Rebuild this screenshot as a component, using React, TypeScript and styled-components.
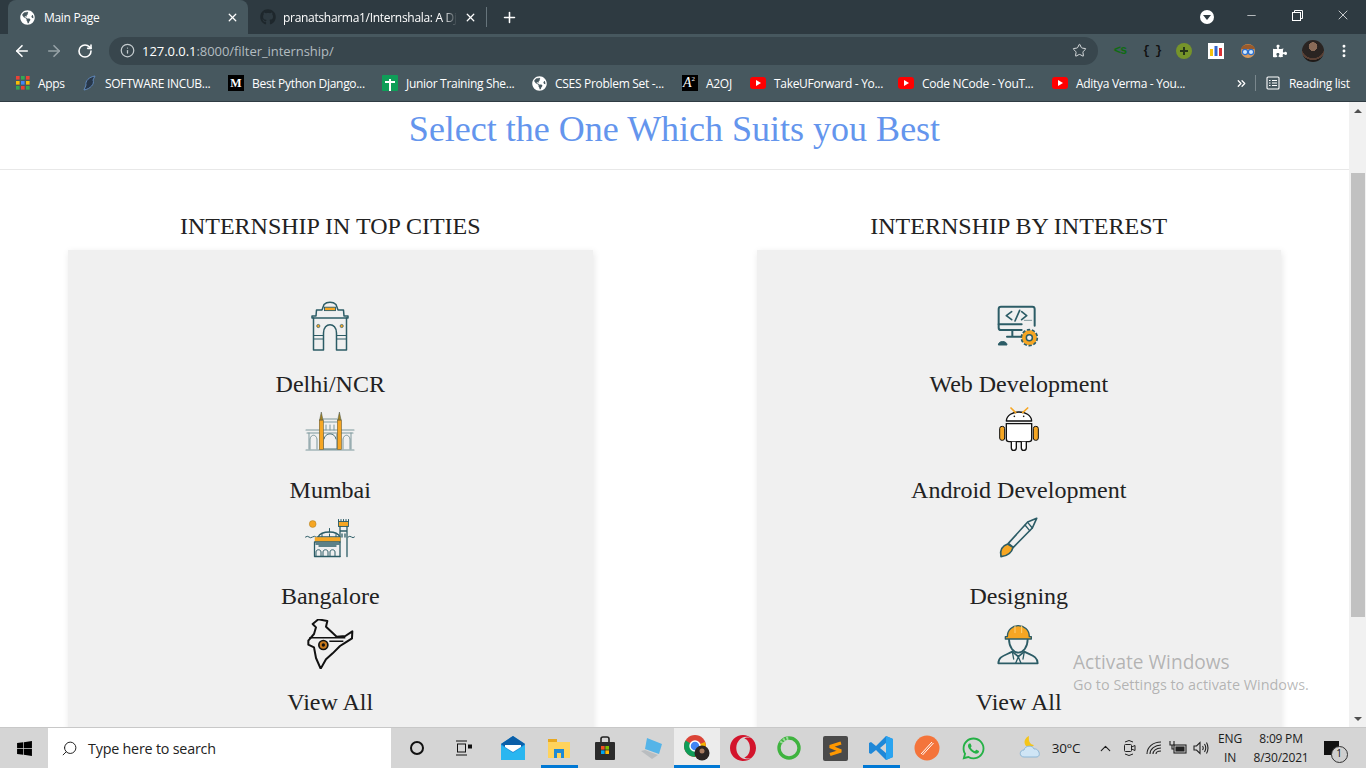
import React from "react";
import styled, { createGlobalStyle } from "styled-components";
import { ArrowLeft, ArrowRight, RotateCw, Info, Star, X, Plus, Minus, MoreVertical, ChevronUp, ChevronsRight, Search } from "lucide-react";
import { FaGlobeAmericas, FaGithub, FaPuzzlePiece, FaWindows, FaWhatsapp } from "react-icons/fa";
import { SiOpera } from "react-icons/si";

const GlobalStyle = createGlobalStyle`
  html, body { margin: 0; padding: 0; overflow: hidden; background: #fff; }
  * { box-sizing: border-box; }
`;

const UI = `"Open Sans", "Noto Sans", sans-serif`;
const SERIF = `"Liberation Serif", "Times New Roman", serif`;
const TEAL = "#2c5c66";
const ORANGE = "#f6a623";

const Screen = styled.div`
  position: relative;
  width: 1366px;
  height: 768px;
  display: flex;
  flex-direction: column;
  overflow: hidden;
`;

/* browser chrome */
const TabStrip = styled.div`
  height: 34px;
  background: #2e3a41;
  display: flex;
  align-items: flex-start;
  padding-left: 8px;
  flex: none;
`;

const Tab = styled.div<{ $active?: boolean; $w: number }>`
  width: ${(p) => p.$w}px;
  height: 34px;
  display: flex;
  align-items: center;
  padding: 0 9px 0 12px;
  gap: 7px;
  font: 12px ${UI};
  letter-spacing: -0.3px;
  color: #fff;
  background: ${(p) => (p.$active ? "#47585f" : "transparent")};
  border-radius: 8px 8px 0 0;
  svg { flex: none; }
`;

const TabTitle = styled.span<{ $fade?: boolean }>`
  flex: 1;
  white-space: nowrap;
  ${(p) => (p.$fade ? "-webkit-mask-image: linear-gradient(to right, #000 92%, transparent);" : "")}
`;

const TabDivider = styled.div`
  width: 1px;
  height: 20px;
  margin-top: 7px;
  background: #66747b;
`;

const NewTab = styled.div`
  width: 44px;
  height: 34px;
  display: flex;
  align-items: center;
  justify-content: center;
  color: #fff;
`;

const WindowControls = styled.div`
  margin-left: auto;
  height: 34px;
  display: flex;
  align-items: flex-start;
  color: #fff;
`;

const ProfileDot = styled.div`
  width: 14px;
  height: 14px;
  margin: 10px 14px 0 0;
  border-radius: 50%;
  background: #fff;
  display: flex;
  align-items: center;
  justify-content: center;
  &::after {
    content: "";
    border: 4px solid transparent;
    border-top: 5px solid #2e3a41;
    border-bottom: 0;
  }
`;

const WinButton = styled.div`
  width: 46px;
  height: 30px;
  display: flex;
  align-items: center;
  justify-content: center;
`;

const Toolbar = styled.div`
  height: 33px;
  flex: none;
  background: #47585f;
  display: flex;
  align-items: center;
  padding-left: 13px;
  color: #fff;
`;

const NavButton = styled.div<{ $dim?: boolean }>`
  width: 32px;
  display: flex;
  justify-content: flex-start;
  color: ${(p) => (p.$dim ? "#97a2a7" : "#fff")};
`;

const Omnibox = styled.div`
  width: 989px;
  height: 28px;
  border-radius: 14px;
  background: #38464d;
  display: flex;
  align-items: center;
  padding: 0 11px;
  gap: 7px;
  font: 13px ${UI};
  letter-spacing: -0.05px;
  color: #fff;
`;

const UrlRest = styled.span`
  color: #b3bcc0;
`;

const OmniStar = styled.div`
  margin-left: auto;
  display: flex;
  color: #d8dcde;
`;

const Extensions = styled.div`
  display: flex;
  align-items: center;
  height: 33px;
  margin-left: 6px;
`;

const Ext = styled.div<{ $w: number }>`
  width: ${(p) => p.$w}px;
  display: flex;
  align-items: center;
  justify-content: center;
`;

const CodeGlyph = styled.span<{ $c: string }>`
  font: 700 12px "Liberation Mono", monospace;
  color: ${(p) => p.$c};
  letter-spacing: -1px;
`;

const Avatar = styled.div`
  width: 22px;
  height: 22px;
  border-radius: 50%;
  background: radial-gradient(circle at 50% 30%, #8a6b58 0 22%, #2a2422 24% 60%, #5a4034 62% 70%, #1e1a18 72%);
`;

const BookmarkBar = styled.div`
  height: 35px;
  flex: none;
  background: #47585f;
  border-bottom: 1px solid #2f3c43;
  display: flex;
  align-items: center;
  padding: 0 0 2px 15px;
  font: 12px ${UI};
  letter-spacing: -0.3px;
  color: #fff;
`;

const Bookmark = styled.div<{ $w: number; $gap?: number }>`
  width: ${(p) => p.$w}px;
  display: flex;
  align-items: center;
  gap: ${(p) => p.$gap ?? 8}px;
  white-space: nowrap;
  svg { flex: none; }
`;

const MediumMark = styled.span`
  width: 16px;
  height: 16px;
  background: #000;
  color: #fff;
  font: 700 12px ${SERIF};
  display: flex;
  align-items: center;
  justify-content: center;
  letter-spacing: 0;
`;

const GreenMark = styled.span`
  position: relative;
  width: 16px;
  height: 16px;
  background: #0f9d58;
  border-radius: 1px;
  &::before { content: ""; position: absolute; left: 7px; top: 4px; width: 2px; height: 12px; background: #fff; }
  &::after { content: ""; position: absolute; left: 3px; top: 6px; width: 10px; height: 2px; background: #fff; }
`;

const A2Mark = styled.span`
  width: 16px;
  height: 16px;
  background: #000;
  color: #fff;
  font: italic 14px ${SERIF};
  display: flex;
  align-items: flex-end;
  padding-left: 1px;
  letter-spacing: 0;
  sup { font-size: 7px; line-height: 9px; align-self: flex-start; font-style: normal; }
`;

const YtMark = styled.span`
  width: 16px;
  height: 12px;
  background: #f00;
  border-radius: 3px;
  display: flex;
  align-items: center;
  justify-content: center;
  &::after {
    content: "";
    border-left: 5px solid #fff;
    border-top: 3px solid transparent;
    border-bottom: 3px solid transparent;
  }
`;

const BarRight = styled.div`
  margin-left: auto;
  display: flex;
  align-items: center;
  padding-right: 15px;
`;

const BarDivider = styled.div`
  width: 1px;
  height: 16px;
  background: #7a878d;
  margin: 0 10px 0 7px;
`;

/* page */
const Viewport = styled.div`
  flex: 1;
  display: flex;
  min-height: 0;
  background: #fff;
`;

const Page = styled.main`
  flex: 1;
  min-width: 0;
  overflow: hidden;
  font-family: ${SERIF};
`;

const Banner = styled.header`
  height: 68px;
  border-bottom: 1px solid #e8e8e8;
  text-align: center;
  font-size: 36px;
  line-height: 54px;
  color: #6495ed;
`;

const Columns = styled.div`
  display: grid;
  grid-template-columns: 1fr 1fr;
  column-gap: 164px;
  padding: 40px 68px 0;
`;

const Column = styled.section``;

const ColumnTitle = styled.h2`
  margin: 0;
  height: 40px;
  text-align: center;
  font-size: 24px;
  font-weight: 400;
  line-height: 32px;
  color: #222;
`;

const Card = styled.div`
  background: #f0f0f0;
  box-shadow: 1px 2px 7px rgba(0, 0, 0, 0.1);
  padding-top: 51px;
  height: 560px;
`;

const Item = styled.div`
  display: flex;
  flex-direction: column;
  align-items: center;
  height: 106px;
`;

const Label = styled.div`
  margin-top: 19px;
  font-size: 24px;
  line-height: 28px;
  color: #222;
`;

const Art = styled.svg`
  width: 50px;
  height: 50px;
  display: block;
  flex: none;
`;

/* scrollbar */
const ScrollTrack = styled.div`
  width: 17px;
  flex: none;
  background: #f1f1f1;
  display: flex;
  flex-direction: column;
  align-items: center;
`;

const ScrollArrow = styled.div<{ $down?: boolean }>`
  height: 17px;
  width: 100%;
  display: flex;
  align-items: center;
  justify-content: center;
  &::after {
    content: "";
    border-left: 4px solid transparent;
    border-right: 4px solid transparent;
    ${(p) => (p.$down ? "border-top: 4px solid #505050;" : "border-bottom: 4px solid #505050;")}
  }
`;

const ScrollThumb = styled.div`
  width: 14px;
  height: 444px;
  margin: 54px 0 auto;
  background: #c1c1c1;
`;

const Watermark = styled.div`
  position: absolute;
  left: 1073px;
  top: 650px;
  font-family: ${UI};
  color: rgba(110, 110, 110, 0.48);
  pointer-events: none;
`;

const WatermarkTitle = styled.div`
  font-size: 19.1px;
  line-height: 24px;
`;

const WatermarkSub = styled.div`
  font-size: 14.4px;
  line-height: 22px;
  white-space: nowrap;
`;

/* taskbar */
const Taskbar = styled.footer`
  height: 41px;
  flex: none;
  background: #d5d5d5;
  display: flex;
  align-items: stretch;
  border-top: 1px solid #c8c8c8;
  font: 13px ${UI};
  color: #1c1c1c;
`;

const StartCell = styled.div`
  width: 48px;
  display: flex;
  align-items: center;
  justify-content: center;
  color: #000;
`;

const SearchBox = styled.div`
  width: 343px;
  background: #fff;
  display: flex;
  align-items: center;
  padding-left: 13px;
  gap: 10px;
  font-size: 14.3px;
  letter-spacing: -0.2px;
  color: #222;
`;

const AppGroup = styled.div`
  display: flex;
  margin-left: 6px;
`;

const TaskCell = styled.div<{ $w?: number; $on?: boolean; $active?: boolean }>`
  width: ${(p) => p.$w ?? 46}px;
  display: flex;
  align-items: center;
  justify-content: center;
  background-color: ${(p) => (p.$active ? "#ececec" : "transparent")};
  background-image: ${(p) => (p.$on ? "linear-gradient(#0078d4, #0078d4)" : "none")};
  background-repeat: no-repeat;
  background-position: center bottom;
  background-size: ${(p) => (p.$active ? "100%" : "37px")} 3px;
`;

const TrayGroup = styled.div`
  display: flex;
  margin-left: 22px;
`;

const Tray = styled.div<{ $w: number; $col?: boolean }>`
  width: ${(p) => p.$w}px;
  display: flex;
  flex-direction: ${(p) => (p.$col ? "column" : "row")};
  align-items: center;
  justify-content: center;
  font-size: 12px;
  line-height: 19px;
  letter-spacing: -0.2px;
  svg { flex: none; }
`;

const TempText = styled.span`
  font-size: 13.5px;
  letter-spacing: -0.3px;
  margin-right: 5px;
`;

const Notify = styled.div`
  position: relative;
  width: 15px;
  height: 14px;
  margin-right: 4px;
  background: #111;
  &::after {
    content: "1";
    position: absolute;
    right: -9px;
    bottom: -8px;
    width: 15px;
    height: 15px;
    border-radius: 50%;
    border: 1px solid #333;
    background: #cfcfcf;
    font: 10px/13px ${UI};
    text-align: center;
    color: #111;
  }
`;

const Line = ({ d, c = TEAL, w = 1.3 }: { d: string; c?: string; w?: number }) => (
  <path d={d} fill="none" stroke={c} strokeWidth={w} strokeLinecap="round" strokeLinejoin="round" />
);

const IndiaGate = () => (
  <Art viewBox="0 0 50 50">
    <Line d="M7 17 V15 H11 L11.5 9 H17 L19 3.5 C22 0.5 28 0.5 31 3.5 L33 9 H38.5 L39 15 H43 V17 Z" w={1.5} />
    <rect x="19.5" y="6.2" width="11" height="3.4" fill={ORANGE} stroke={TEAL} strokeWidth="0.9" />
    <Line d="M8.5 17 V49 H18.5 V32 C18.5 21 31.5 21 31.5 32 V49 H41.5 V17" w={1.5} />
    <Line d="M8.5 34.5 H18.5 M31.5 34.5 H41.5 M8.5 38 H18.5 M31.5 38 H41.5" w={1} />
    <circle cx="13.3" cy="25" r="1.6" fill={ORANGE} stroke={TEAL} strokeWidth="0.7" />
    <circle cx="36.7" cy="25" r="1.6" fill={ORANGE} stroke={TEAL} strokeWidth="0.7" />
  </Art>
);

const GatewayMumbai = () => (
  <Art viewBox="0 0 50 50">
    <Line d="M1 23 H49 M2 26 H48 M18 12 H32 M18 15 H32 M1 43 H49" c="#7d979c" w={1.1} />
    <Line d="M18 27 V42 H32 V27 M19 32 C20 25 30 25 31 32" c="#4d737b" w={1} />
    <Line d="M5 42 V32 C6 27 11 27 12 32 V42 M38 42 V32 C39 27 44 27 45 32 V42" c="#7d979c" w={1} />
    <Line d="M4 26 V42 M46 26 V42 M21 18 V23 M25 18 V23 M29 18 V23" c="#7d979c" w={1} />
    <rect x="14.3" y="13" width="4" height="29.5" fill={ORANGE} stroke="#6b5a30" strokeWidth="0.6" />
    <rect x="32.4" y="13" width="4" height="29.5" fill={ORANGE} stroke="#6b5a30" strokeWidth="0.6" />
    <path d="M16.3 5 L14.6 13 H18 Z M34.4 5 L32.7 13 H36.1 Z" fill="#a3801f" stroke="#4d5a50" strokeWidth="0.5" />
  </Art>
);

const PalaceBangalore = () => (
  <Art viewBox="0 0 50 50">
    <circle cx="7.7" cy="11" r="3.4" fill={ORANGE} stroke="#a67b22" strokeWidth="0.5" />
    <Line d="M0.5 24 q2 -1.5 3.5 0 t3.5 0 t3.5 0 M43 24 q2 -1.5 3.5 0 t3 0" w={1} />
    <rect x="33.5" y="8.5" width="10" height="5" fill={ORANGE} stroke={TEAL} strokeWidth="0.9" />
    <Line d="M33.5 6.5 V8.5 M36 6.5 V8.5 M38.5 6.5 V8.5 M41 6.5 V8.5 M43.5 6.5 V8.5" w={1} />
    <Line d="M35 13.5 V43.5 M42 13.5 V43.5 M35 18 H42 M37 21 V24 M40 21 V24" />
    <Line d="M13 24 C15 20 21 19 24.5 19 C28 19 33 20 35 24 M12 24 H35" />
    <Line d="M24.5 19 V15.5 M17 21.5 V24 M24.5 21 V24 M31 21.5 V24" w={1} />
    <rect x="10" y="24.5" width="25" height="4" fill={ORANGE} stroke={ORANGE} strokeWidth="0.5" />
    <Line d="M9.5 29 H35 M9.5 43.5 H35 M9.5 29 V43.5 M14 33 H31 M11 31 H34" />
    <Line d="M11 43 V39 C11 36 16 36 16 39 V43 M18 43 V39 C18 36 23 36 23 39 V43 M25 43 V39 C25 36 30 36 30 39 V43" w={1} />
  </Art>
);

const IndiaMap = () => (
  <Art viewBox="45 327 150 150">
    <path
      d="M85 328 L112 333 L108 350 L125 366 L140 380 L166 378 L187 364 L186 385 L166 398 L150 408 L128 430 L108 448 L92 476 L78 444 L72 412 L55 404 L55 392 L72 372 L78 352 L68 342 Z"
      fill="#f0f0f0"
      stroke="#111"
      strokeWidth="6"
      strokeLinejoin="round"
    />
    <path d="M58 383 H166 M118 394 H160" fill="none" stroke="#111" strokeWidth="4.5" />
    <circle cx="100" cy="405" r="16" fill="#111" />
    <circle cx="100" cy="405" r="11" fill="#c8791c" />
    <circle cx="100" cy="405" r="5" fill="#111" />
  </Art>
);

const WebDev = () => (
  <Art viewBox="45 18 150 150">
    <Line d="M128 105 H66 Q59 105 59 98 V42 Q59 35 66 35 H160 Q167 35 167 42 V92" w={6} />
    <Line d="M59 88 H128 M100 105 V125 M84 125 H130" w={6} />
    <Line d="M98 50 L82 62 L98 74 M122 46 L108 78 M128 50 L143 62 L128 74" w={5} />
    <Line d="M136 76 H158" c="#7d979c" w={3} />
    <path d="M58 150 C58 136 84 136 84 150 Z" fill={TEAL} stroke={TEAL} strokeWidth="3" />
    <circle cx="151" cy="128" r="16" fill="none" stroke={ORANGE} strokeWidth="14" />
    <circle cx="151" cy="128" r="24" fill="none" stroke={TEAL} strokeWidth="5" strokeDasharray="10 5" />
    <circle cx="151" cy="128" r="9" fill="#f0f0f0" stroke={TEAL} strokeWidth="4.5" />
  </Art>
);

const AndroidBot = () => (
  <Art viewBox="45 336 150 150">
    <path d="M82 378 C84 342 156 342 158 378 Z" fill="#fff" stroke="#111" strokeWidth="4" strokeLinejoin="round" />
    <path d="M82 386 H158 V432 Q158 440 150 440 H90 Q82 440 82 432 Z" fill="#fff" stroke="#111" strokeWidth="4" />
    <rect x="62" y="394" width="15" height="42" rx="7" fill={ORANGE} stroke="#111" strokeWidth="3" />
    <rect x="163" y="394" width="15" height="42" rx="7" fill={ORANGE} stroke="#111" strokeWidth="3" />
    <path d="M97 440 V458 Q97 466 104 466 Q112 466 112 458 V440 M127 440 V458 Q127 466 134 466 Q142 466 142 458 V440" fill="#fff" stroke="#111" strokeWidth="4" />
    <Line d="M110 353 L96 339 M131 353 L146 339" c={ORANGE} w={5} />
    <circle cx="106" cy="364" r="2.5" fill="#111" />
    <circle cx="134" cy="364" r="2.5" fill="#111" />
  </Art>
);

const Brush = () => (
  <Art viewBox="45 9 150 150">
    <path d="M173 25 L146 36 L88 100 L103 112 L160 54 Z" fill="none" stroke={TEAL} strokeWidth="5" strokeLinejoin="round" />
    <Line d="M138 45 L152 62 M146 37 L160 54" w={4} />
    <path d="M86 102 C68 108 62 122 66 140 C82 138 98 130 102 112 Z" fill={ORANGE} stroke={TEAL} strokeWidth="5" strokeLinejoin="round" />
  </Art>
);

const Worker = () => (
  <Art viewBox="45 327 150 150">
    <Line d="M90 388 C90 412 104 428 118 428 C132 428 146 412 146 388" w={5.5} />
    <Line d="M58 460 C58 438 80 436 100 425 L118 440 L136 425 C156 436 176 438 176 460 Z" w={5.5} />
    <Line d="M118 440 L110 460 M118 440 L126 460 M100 425 L104 447 M136 425 L132 447" w={4} />
    <path d="M85 380 C85 336 151 336 151 380 H157 V387 H79 V380 Z" fill={ORANGE} stroke={TEAL} strokeWidth="4" strokeLinejoin="round" />
    <Line d="M108 348 V368 M128 348 V368" c="#ffd27a" w={3} />
  </Art>
);

const cities = [
  { label: "Delhi/NCR", art: <IndiaGate /> },
  { label: "Mumbai", art: <GatewayMumbai /> },
  { label: "Bangalore", art: <PalaceBangalore /> },
  { label: "View All", art: <IndiaMap /> },
];

const interests = [
  { label: "Web Development", art: <WebDev /> },
  { label: "Android Development", art: <AndroidBot /> },
  { label: "Designing", art: <Brush /> },
  { label: "View All", art: <Worker /> },
];

const AppsGrid = () => (
  <svg width="16" height="16" viewBox="0 0 16 16">
    {[0, 1, 2].map((r) =>
      [0, 1, 2].map((c) => (
        <rect key={`${r}${c}`} x={1 + c * 5} y={1 + r * 5} width="3.6" height="3.6" fill={["#ea4335", "#fbbc05", "#34a853", "#4285f4"][(r + c * 2) % 4]} />
      ))
    )}
  </svg>
);

const Swoosh = () => (
  <svg width="16" height="16" viewBox="0 0 16 16">
    <path d="M13 1 C7 2 3 6 4 10 L2 15 C8 14 13 9 11 5 Z" fill="#27374a" stroke="#5f86b8" strokeWidth="1" />
  </svg>
);

const ReadingList = () => (
  <svg width="14" height="14" viewBox="0 0 14 14" fill="none" stroke="#fff" strokeWidth="1.1">
    <rect x="1" y="1" width="12" height="12" rx="1" />
    <path d="M3 4.5 H4.5 M6 4.5 H11 M3 7 H4.5 M6 7 H11 M3 9.5 H4.5 M6 9.5 H11" />
  </svg>
);

const RestoreIcon = () => (
  <svg width="11" height="11" viewBox="0 0 11 11" fill="none" stroke="#fff" strokeWidth="1">
    <rect x="0.5" y="2.5" width="8" height="8" />
    <path d="M2.5 2.5 V0.5 H10.5 V8.5 H8.5" />
  </svg>
);

const BarsExt = () => (
  <svg width="16" height="16" viewBox="0 0 16 16">
    <rect width="16" height="16" fill="#fff" />
    <rect x="2" y="6" width="3" height="7" fill="#f4c20d" />
    <rect x="6.5" y="3" width="3" height="10" fill="#3366cc" />
    <rect x="11" y="5" width="3" height="8" fill="#db3236" />
  </svg>
);

const NerdFace = () => (
  <svg width="16" height="18" viewBox="0 0 16 18">
    <circle cx="8" cy="9" r="7" fill="#d99a5b" />
    <path d="M1 7 C2 1 14 1 15 7 Z" fill="#9a5a2a" />
    <circle cx="5" cy="10" r="2.6" fill="#cfe8ff" stroke="#2a6fd0" strokeWidth="1.2" />
    <circle cx="11" cy="10" r="2.6" fill="#cfe8ff" stroke="#2a6fd0" strokeWidth="1.2" />
  </svg>
);

const Cortana = () => (
  <svg width="16" height="16" viewBox="0 0 16 16">
    <circle cx="8" cy="8" r="6" fill="none" stroke="#111" strokeWidth="2" />
  </svg>
);

const TaskView = () => (
  <svg width="16" height="16" viewBox="0 0 16 16" fill="none" stroke="#111" strokeWidth="1">
    <path d="M0 1 H11 M0 15 H11" />
    <rect x="1.5" y="4" width="8" height="8" />
    <rect x="12.5" y="5" width="3" height="3" fill="#111" />
  </svg>
);

const MailIcon = () => (
  <svg width="24" height="24" viewBox="0 0 24 24">
    <path d="M0 8 L12 0 L24 8 V24 H0 Z" fill="#1e90dc" />
    <path d="M0 8 L12 0 L24 8 L12 16 Z" fill="#0b5fa8" />
    <path d="M4 9 H20 V11 L12 16 L4 11 Z" fill="#fff" />
    <path d="M0 9 L12 17 L24 9 V24 H0 Z" fill="#29b6f0" />
  </svg>
);

const FolderIcon = () => (
  <svg width="24" height="24" viewBox="0 0 24 24">
    <path d="M1 3 H10 V6 H1 Z" fill="#e8a820" />
    <path d="M1 6 H23 V22 H1 Z" fill="#ffd35c" />
    <path d="M7 13 H17 V22 H14 V17 H10 V22 H7 Z" fill="#1f8ad6" />
  </svg>
);

const StoreIcon = () => (
  <svg width="24" height="24" viewBox="0 0 24 24">
    <path d="M8 7 V3 Q8 1 10 1 H14 Q16 1 16 3 V7" fill="none" stroke="#222" strokeWidth="1.6" />
    <rect x="2" y="6" width="20" height="18" rx="1" fill="#2b2b2b" />
    <rect x="8" y="10" width="3.6" height="3.6" fill="#f25022" />
    <rect x="12.4" y="10" width="3.6" height="3.6" fill="#7fba00" />
    <rect x="8" y="14.4" width="3.6" height="3.6" fill="#00a4ef" />
    <rect x="12.4" y="14.4" width="3.6" height="3.6" fill="#ffb900" />
  </svg>
);

const LaptopIcon = () => (
  <svg width="24" height="24" viewBox="0 0 24 24">
    <path d="M8 2 L23 8 L20 18 L6 13 Z" fill="#55b4e8" />
    <path d="M2 15 L6 14 L19 19 L13 23 Z" fill="#b9bdc0" />
  </svg>
);

const ChromeIcon = () => (
  <svg width="30" height="30" viewBox="0 0 30 30">
    <circle cx="13" cy="13" r="11" fill="#db4437" />
    <path d="M13 13 L3.5 7.5 A11 11 0 0 0 13 24 Z" fill="#0f9d58" />
    <path d="M13 13 L23 9 A11 11 0 0 1 13 24 Z" fill="#f4b400" />
    <circle cx="13" cy="13" r="5" fill="#4285f4" stroke="#fff" strokeWidth="1.5" />
    <circle cx="20" cy="20" r="7.5" fill="#2c2522" />
    <circle cx="20" cy="18" r="2.5" fill="#a97c60" />
  </svg>
);

const GreenRing = () => (
  <svg width="26" height="26" viewBox="0 0 26 26">
    <circle cx="13" cy="13" r="10" fill="none" stroke="#3fb33f" strokeWidth="3.4" />
    <path d="M5 8 A10 10 0 0 1 13 3" fill="none" stroke="#9ad99a" strokeWidth="3.4" strokeDasharray="2 1.5" />
  </svg>
);

const SublimeIcon = () => (
  <svg width="25" height="25" viewBox="0 0 25 25">
    <rect width="25" height="25" rx="2" fill="#4a4a4a" />
    <path d="M18 7 L7 10.5 L18 15 L7 18.5" fill="none" stroke="#ff9800" strokeWidth="3.4" strokeLinejoin="bevel" />
  </svg>
);

const VsCodeIcon = () => (
  <svg width="26" height="26" viewBox="0 0 26 26">
    <path d="M18 1 L25 4 V22 L18 25 L8 15 L3 19 L1 18 V8 L3 7 L8 11 Z M18 8 L12 13 L18 18 Z" fill="#1f88d8" fillRule="evenodd" />
    <path d="M18 1 L25 4 V22 L18 25 Z" fill="#2aa4f0" />
  </svg>
);

const PenIcon = () => (
  <svg width="26" height="26" viewBox="0 0 26 26">
    <circle cx="13" cy="13" r="12.5" fill="#f4743b" />
    <path d="M7 19 L18 7 M8.5 20 L19.5 8" stroke="#fff" strokeWidth="1" />
  </svg>
);

const WeatherIcon = () => (
  <svg width="26" height="26" viewBox="0 0 26 26">
    <path d="M11 1 C7 3 5 7 8 11 C11 13 15 12 16 10 C13 10 10 7 11 1 Z" fill="#f5c518" />
    <path d="M6 22 C1 22 1 15 6 15 C7 10 15 10 16 14 C21 13 24 22 18 22 Z" fill="#cfe5f5" stroke="#8db7d6" strokeWidth="1" />
  </svg>
);

const MeetIcon = () => (
  <svg width="13" height="18" viewBox="0 0 13 18" fill="none" stroke="#222" strokeWidth="1">
    <path d="M2 3 Q6 0 10 3 M2 15 Q6 18 10 15" />
    <rect x="1.5" y="5.5" width="7" height="7" rx="1" />
    <path d="M8.5 8 L12 6.5 V11.5 L8.5 10" />
  </svg>
);

const WifiIcon = () => (
  <svg width="16" height="16" viewBox="0 0 16 16" fill="none" stroke="#222" strokeWidth="1.1">
    <path d="M1 14 C1 7 7 2 15 2 M4 14 C4 9 9 5 15 5 M7 14 C7 11 10 8 15 8 M10 14 C10 12 12 11 15 11" />
  </svg>
);

const BatteryPlug = () => (
  <svg width="18" height="16" viewBox="0 0 18 16" fill="none" stroke="#222" strokeWidth="1.1">
    <rect x="5" y="5" width="12" height="8" />
    <rect x="7" y="7" width="8" height="4" fill="#222" />
    <path d="M1 1 V5 H5 V1 M3 5 V9 H5" />
  </svg>
);

const SpeakerIcon = () => (
  <svg width="16" height="16" viewBox="0 0 16 16" fill="none" stroke="#222" strokeWidth="1.1">
    <path d="M1 6 H3.5 L7 2.5 V13.5 L3.5 10 H1 Z" />
    <path d="M9.5 6 Q11 8 9.5 10 M11.5 4 Q14 8 11.5 12 M13.5 2.5 Q16.5 8 13.5 13.5" />
  </svg>
);

const App: React.FC = () => (
  <>
    <GlobalStyle />
    <Screen>
      <TabStrip>
        <Tab $active $w={240}>
          <FaGlobeAmericas size={15} color="#fff" />
          <TabTitle style={{ marginLeft: 2 }}>Main Page</TabTitle>
          <X size={13} strokeWidth={2.4} />
        </Tab>
        <Tab $w={238}>
          <FaGithub size={16} color="#1e272c" />
          <TabTitle $fade>pranatsharma1/Internshala: A Dj</TabTitle>
          <X size={13} strokeWidth={2.4} />
        </Tab>
        <TabDivider />
        <NewTab>
          <Plus size={17} strokeWidth={2.2} />
        </NewTab>
        <WindowControls>
          <ProfileDot />
          <WinButton>
            <Minus size={13} strokeWidth={1.2} />
          </WinButton>
          <WinButton>
            <RestoreIcon />
          </WinButton>
          <WinButton>
            <X size={16} strokeWidth={1.1} />
          </WinButton>
        </WindowControls>
      </TabStrip>

      <Toolbar>
        <NavButton>
          <ArrowLeft size={18} strokeWidth={2.2} />
        </NavButton>
        <NavButton $dim>
          <ArrowRight size={18} strokeWidth={2.2} />
        </NavButton>
        <NavButton>
          <RotateCw size={16} strokeWidth={2.4} />
        </NavButton>
        <Omnibox>
          <Info size={15} color="#c4cbce" />
          <span>
            127.0.0.1<UrlRest>:8000/filter_internship/</UrlRest>
          </span>
          <OmniStar>
            <Star size={15} strokeWidth={1.6} />
          </OmniStar>
        </Omnibox>
        <Extensions>
          <Ext $w={32}>
            <CodeGlyph $c="#0f6b12">{"<s"}</CodeGlyph>
          </Ext>
          <Ext $w={32}>
            <CodeGlyph $c="#111">{"{ }"}</CodeGlyph>
          </Ext>
          <Ext $w={32}>
            <svg width="16" height="16" viewBox="0 0 16 16">
              <circle cx="8" cy="8" r="8" fill="#76942a" />
              <path d="M8 4 V12 M4 8 H12" stroke="#27351a" strokeWidth="2" />
            </svg>
          </Ext>
          <Ext $w={32}>
            <BarsExt />
          </Ext>
          <Ext $w={32}>
            <NerdFace />
          </Ext>
          <Ext $w={32}>
            <FaPuzzlePiece size={14} color="#fff" />
          </Ext>
          <Ext $w={34}>
            <Avatar />
          </Ext>
          <Ext $w={28}>
            <MoreVertical size={16} strokeWidth={2.4} color="#fff" />
          </Ext>
        </Extensions>
      </Toolbar>

      <BookmarkBar>
        <Bookmark $w={67} $gap={7}>
          <AppsGrid />
          Apps
        </Bookmark>
        <Bookmark $w={146} $gap={7}>
          <Swoosh />
          SOFTWARE INCUB...
        </Bookmark>
        <Bookmark $w={154}>
          <MediumMark>M</MediumMark>
          Best Python Django...
        </Bookmark>
        <Bookmark $w={150}>
          <GreenMark />
          Junior Training She...
        </Bookmark>
        <Bookmark $w={150}>
          <FaGlobeAmericas size={15} color="#fff" />
          CSES Problem Set -...
        </Bookmark>
        <Bookmark $w={68}>
          <A2Mark>
            A<sup>2</sup>
          </A2Mark>
          A2OJ
        </Bookmark>
        <Bookmark $w={148}>
          <YtMark />
          TakeUForward - Yo...
        </Bookmark>
        <Bookmark $w={154}>
          <YtMark />
          Code NCode - YouT...
        </Bookmark>
        <Bookmark $w={160}>
          <YtMark />
          Aditya Verma - You...
        </Bookmark>
        <BarRight>
          <ChevronsRight size={13} strokeWidth={2.4} />
          <BarDivider />
          <Bookmark $w={85} $gap={9}>
            <ReadingList />
            Reading list
          </Bookmark>
        </BarRight>
      </BookmarkBar>

      <Viewport>
        <Page>
          <Banner>Select the One Which Suits you Best</Banner>
          <Columns>
            <Column>
              <ColumnTitle>INTERNSHIP IN TOP CITIES</ColumnTitle>
              <Card>
                {cities.map((c) => (
                  <Item key={c.label}>
                    {c.art}
                    <Label>{c.label}</Label>
                  </Item>
                ))}
              </Card>
            </Column>
            <Column>
              <ColumnTitle>INTERNSHIP BY INTEREST</ColumnTitle>
              <Card>
                {interests.map((c) => (
                  <Item key={c.label}>
                    {c.art}
                    <Label>{c.label}</Label>
                  </Item>
                ))}
              </Card>
            </Column>
          </Columns>
        </Page>
        <ScrollTrack>
          <ScrollArrow />
          <ScrollThumb />
          <ScrollArrow $down />
        </ScrollTrack>
      </Viewport>

      <Taskbar>
        <StartCell>
          <FaWindows size={17} />
        </StartCell>
        <SearchBox>
          <Search size={17} strokeWidth={1.4} style={{ transform: "scaleX(-1)" }} />
          Type here to search
        </SearchBox>
        <TaskCell $w={52}>
          <Cortana />
        </TaskCell>
        <TaskCell $w={41}>
          <TaskView />
        </TaskCell>
        <AppGroup>
          <TaskCell>
            <MailIcon />
          </TaskCell>
          <TaskCell $on>
            <FolderIcon />
          </TaskCell>
          <TaskCell>
            <StoreIcon />
          </TaskCell>
          <TaskCell>
            <LaptopIcon />
          </TaskCell>
          <TaskCell $on $active>
            <ChromeIcon />
          </TaskCell>
          <TaskCell>
            <SiOpera size={26} color="#d3142c" />
          </TaskCell>
          <TaskCell>
            <GreenRing />
          </TaskCell>
          <TaskCell>
            <SublimeIcon />
          </TaskCell>
          <TaskCell $on>
            <VsCodeIcon />
          </TaskCell>
          <TaskCell>
            <PenIcon />
          </TaskCell>
          <TaskCell>
            <FaWhatsapp size={25} color="#25b146" />
          </TaskCell>
        </AppGroup>
        <TrayGroup>
          <Tray $w={26}>
            <WeatherIcon />
          </Tray>
          <Tray $w={49}>
            <TempText>30°C</TempText>
          </Tray>
          <Tray $w={24}>
            <ChevronUp size={17} strokeWidth={1.6} />
          </Tray>
          <Tray $w={24}>
            <MeetIcon />
          </Tray>
          <Tray $w={25}>
            <WifiIcon />
          </Tray>
          <Tray $w={23}>
            <BatteryPlug />
          </Tray>
          <Tray $w={24}>
            <SpeakerIcon />
          </Tray>
          <Tray $w={34} $col>
            <span>ENG</span>
            <span>IN</span>
          </Tray>
          <Tray $w={68} $col>
            <span>8:09 PM</span>
            <span>8/30/2021</span>
          </Tray>
          <Tray $w={36}>
            <Notify />
          </Tray>
        </TrayGroup>
      </Taskbar>

      <Watermark>
        <WatermarkTitle>Activate Windows</WatermarkTitle>
        <WatermarkSub>Go to Settings to activate Windows.</WatermarkSub>
      </Watermark>
    </Screen>
  </>
);

export default App;
